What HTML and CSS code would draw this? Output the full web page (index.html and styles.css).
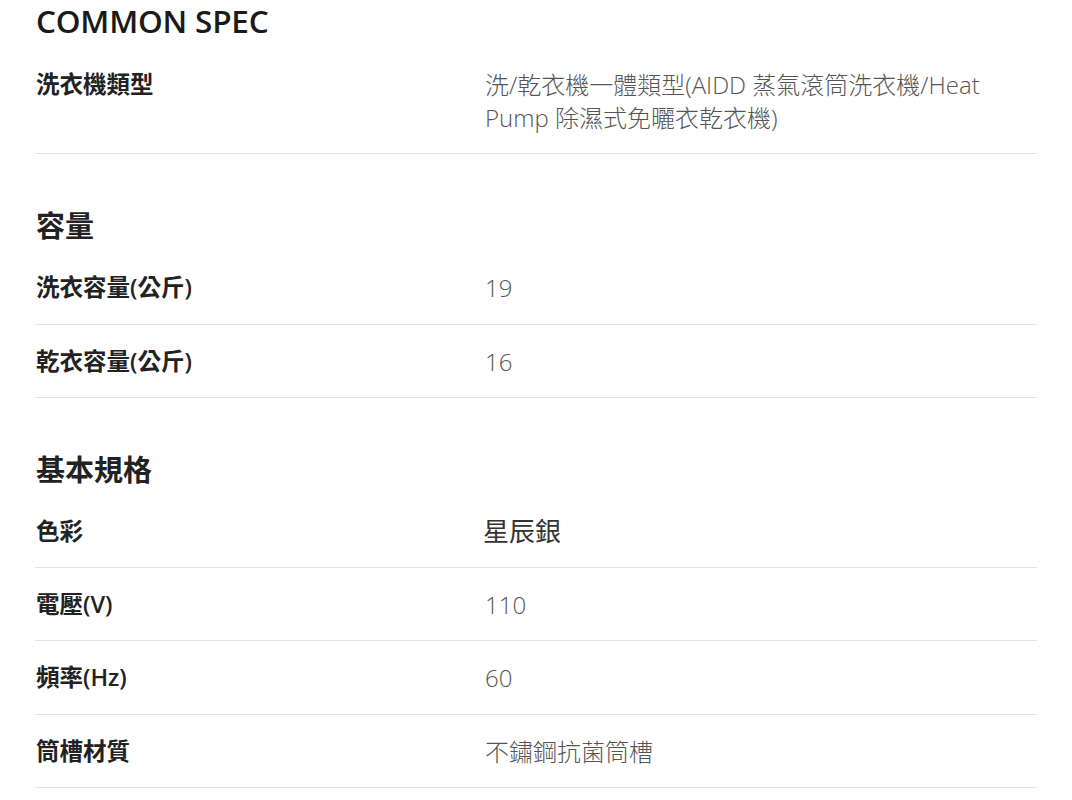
FILE: index.html
```html
<!DOCTYPE html>
<html lang="zh-Hant">
<head>
<meta charset="utf-8">
<title>Common Spec</title>
<link rel="stylesheet" href="styles.css">
</head>
<body>
<div class="spec">
  <h1 class="title">COMMON SPEC</h1>
  <div class="row">
    <div class="label">洗衣機類型</div>
    <div class="value">洗/乾衣機一體類型(AIDD 蒸氣滾筒洗衣機/Heat Pump 除濕式免曬衣乾衣機)</div>
  </div>

  <h2 class="section">容量</h2>
  <div class="row">
    <div class="label">洗衣容量(公斤)</div>
    <div class="value">19</div>
  </div>
  <div class="row">
    <div class="label">乾衣容量(公斤)</div>
    <div class="value">16</div>
  </div>

  <h2 class="section">基本規格</h2>
  <div class="row">
    <div class="label">色彩</div>
    <div class="value"><span class="strong">星辰銀</span></div>
  </div>
  <div class="row">
    <div class="label">電壓(V)</div>
    <div class="value">110</div>
  </div>
  <div class="row">
    <div class="label">頻率(Hz)</div>
    <div class="value">60</div>
  </div>
  <div class="row">
    <div class="label">筒槽材質</div>
    <div class="value">不鏽鋼抗菌筒槽</div>
  </div>
</div>
</body>
</html>
```

FILE: styles.css
```css
html, body {
  margin: 0;
  padding: 0;
  background: #fff;
}
body {
  font-family: "Open Sans", "Noto Sans CJK TC", sans-serif;
  color: #222;
}
.spec {
  margin-left: 35px;
  width: 1002px;
}
.title {
  margin: 0;
  padding-top: 1px;
  padding-left: 1px;
  font-size: 31.5px;
  line-height: 40px;
  font-weight: 600;
  color: #1a1a1a;
  letter-spacing: -0.2px;
}
.row {
  display: grid;
  grid-template-columns: 450px 1fr;
  padding: 20px 0 19.3px;
  line-height: 33px;
  font-size: 24px;
  border-bottom: 1px solid #e3e3e3;
}
.title + .row {
  margin-top: 7px;
}
.label {
  font-weight: 600;
  color: #222;
  padding-left: 1px;
  font-size: 23.5px;
}
.value {
  font-weight: 300;
  color: #555;
  padding-right: 40px;
}
.value .strong {
  display: inline-block;
  font-size: 26px;
  line-height: 33px;
  font-weight: 400;
  color: #333;
  margin-left: -2px;
  vertical-align: top;
}
.section {
  margin: 52px 0 5px;
  font-size: 29px;
  line-height: 40px;
  font-weight: 600;
  color: #222;
  padding-left: 1px;
}
```
